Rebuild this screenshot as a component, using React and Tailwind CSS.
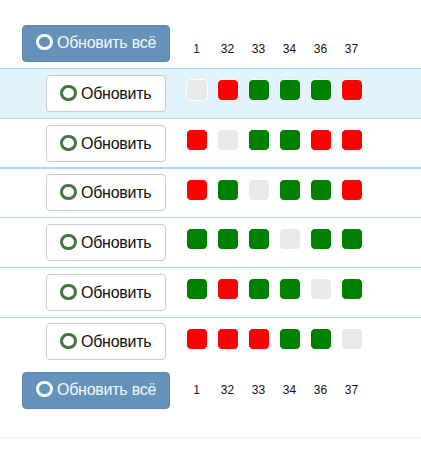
import React from 'react';

const versions = ['1', '32', '33', '34', '36', '37'];

const rows = [
  { cells: 'xrgggr', rowClass: 'h-[50px] pt-[6px] bg-[#e2f4fb] border-t border-[#a6dbf0]', gridClass: 'mt-[4px]' },
  { cells: 'rxggrr', rowClass: 'h-[49px] pt-[6px] border-t border-[#a6dbf0]', gridClass: 'mt-[4px]' },
  { cells: 'rgxggr', rowClass: 'h-[50px] pt-[5px] border-t-2 border-[#a6dbf0]', gridClass: 'mt-[5px]' },
  { cells: 'gggxgg', rowClass: 'h-[50px] pt-[6px] border-t border-[#add6e3]', gridClass: 'mt-[4px]' },
  { cells: 'grggxg', rowClass: 'h-[50px] pt-[6px] border-t border-[#add6e3]', gridClass: 'mt-[4px]' },
  { cells: 'rrrggx', rowClass: 'h-[50px] pt-[5px] border-t border-[#add6e3]', gridClass: 'mt-[5px]' },
];

const cellColor = { r: 'bg-[#ff0000]', g: 'bg-[#008000]', x: 'bg-[#e9e9e9]' };

const Ring = ({ className }) => (
  <span className={'inline-block w-[17px] h-[16px] rounded-full border-[3px] shrink-0 ' + className}></span>
);

const UpdateAll = () => (
  <button className="w-[148px] h-[37px] rounded-[4px] bg-[#6592ba] border border-[#5d89b0] text-[#f4f8fb] text-[16px] tracking-[-0.25px] flex items-center pl-[13px]">
    <Ring className="border-[#f5fafd] -mt-[3px]" />
    <span className="ml-[4px] -mt-[1px]">Обновить всё</span>
  </button>
);

const Versions = () => (
  <div className="flex ml-[11px] text-[12px] text-[#111111]">
    {versions.map((v) => (
      <span key={v} className="w-[31px] text-center">{v}</span>
    ))}
  </div>
);

const App = () => {
  return (
    <div className="w-[421px] h-[464px] bg-white overflow-hidden font-['Liberation_Sans',Arial,sans-serif]">
      <div className="h-[68px] pt-[25px] pl-[22px] flex items-start">
        <UpdateAll />
        <div className="h-[37px] flex items-end pb-[7px] mt-[3px]">
          <Versions />
        </div>
      </div>

      {rows.map((row, i) => (
        <div key={i} className={'flex items-start pl-[46px] ' + row.rowClass}>
          <button className="w-[120px] h-[37px] rounded-[4px] bg-white border border-[#cccccc] text-[#111111] text-[16px] tracking-[-0.25px] flex items-center pl-[13px]">
            <Ring className="border-[#44763f] -mt-[2px]" />
            <span className="ml-[4px]">Обновить</span>
          </button>
          <div className={'flex ml-[20px] gap-[9px] ' + row.gridClass}>
            {row.cells.split('').map((c, j) => (
              <span key={j} className={'w-[22px] h-[22px] rounded-[5px] border border-white ' + cellColor[c]}></span>
            ))}
          </div>
        </div>
      ))}

      <div className="pl-[22px] pt-[5px] flex items-start h-[71px] border-b border-[#eeeeee]">
        <UpdateAll />
        <div className="h-[37px] flex items-center -mt-[1px]">
          <Versions />
        </div>
      </div>
    </div>
  );
};

export default App;
